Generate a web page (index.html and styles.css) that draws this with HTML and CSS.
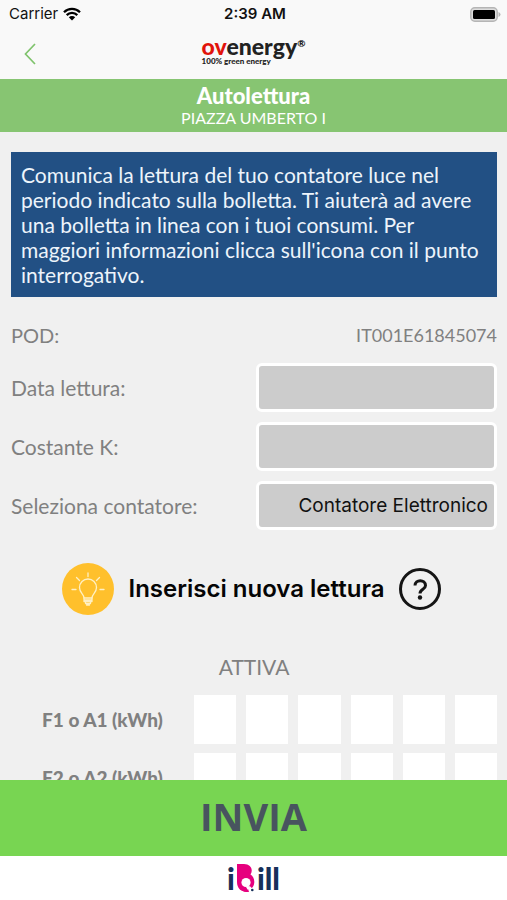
FILE: index.html
```html
<!DOCTYPE html>
<html lang="it">
<head>
<meta charset="utf-8">
<meta name="viewport" content="width=device-width, initial-scale=1">
<title>Autolettura</title>
<link rel="stylesheet" href="styles.css">
</head>
<body>
<div class="app">
  <div class="status">
    <div class="status-left"><span>Carrier</span>
      <svg class="wifi" viewBox="0 0 18 14" aria-hidden="true"><path d="M1 5.2a11.4 11.4 0 0 1 16 0M3.7 8.1a7.5 7.5 0 0 1 10.6 0" fill="none" stroke="#000" stroke-width="2.3"/><path d="M5.8 10.3a4.5 4.5 0 0 1 6.400 0L9 13.600z"/></svg>
    </div>
    <time class="clock">2:39 AM</time>
    <div class="status-right">
      <svg class="battery" viewBox="0 0 31 15" aria-hidden="true"><rect x=".8" y=".8" width="26.4" height="13.4" rx="4" fill="#ddd" stroke="#b5b5b5" stroke-width="1.5"/><rect x="3" y="3" width="22" height="9" rx="1.500"/><path d="M28.500 5v5q2-.8 2-2.500t-2-2.500" fill="#b5b5b5"/></svg>
    </div>
  </div>
  <header class="nav">
    <button class="back" type="button" aria-label="Indietro"><svg viewBox="0 0 12 22" aria-hidden="true"><path d="M11 1 1.500 11 11 21" fill="none" stroke="#7fc36c" stroke-width="1.700"/></svg></button>
    <div class="brand">
      <div class="brand-name"><span class="brand-red">ov</span>energy<sup>®</sup></div>
      <div class="brand-tag">100% green energy</div>
    </div>
  </header>
  <div class="title">
    <h1>Autolettura</h1>
    <p>PIAZZA UMBERTO I</p>
  </div>
  <main class="content">
    <p class="info">Comunica la lettura del tuo contatore luce nel periodo indicato sulla bolletta. Ti aiuterà ad avere una bolletta in linea con i tuoi consumi. Per maggiori informazioni clicca sull'icona con il punto interrogativo.</p>
    <div class="pod"><span>POD:</span><span class="pod-value">IT001E61845074</span></div>
    <div class="fields">
      <div class="field"><label for="data">Data lettura:</label><input id="data" type="text"></div>
      <div class="field"><label for="costante">Costante K:</label><input id="costante" type="text"></div>
      <div class="field"><label for="contatore">Seleziona contatore:</label><select id="contatore"><option>Contatore Elettronico</option></select></div>
    </div>
    <div class="insert">
      <svg class="bulb" viewBox="0 0 52 52" aria-hidden="true"><circle cx="26" cy="26" r="26" fill="#ffc02c"/><g fill="none" stroke="#fff0c4" stroke-width="1.300" stroke-linecap="round" stroke-linejoin="round"><path d="M22 35c0-4-4.500-5-4.500-10.500a8.500 8.500 0 0 1 17 0C34.500 30 30 31 30 35z"/><path d="M22 35v3.500h8V35M22 37h8M23.500 38.500v2h5v-2M24.500 42h3M26 10v3.500M14.500 14.500l3 3M37.500 14.500l-3 3M10 26.500h4M38 26.500h4"/></g></svg>
      <h2>Inserisci nuova lettura</h2>
      <button class="help" type="button" aria-label="Aiuto"><svg viewBox="0 0 42 42" aria-hidden="true"><circle cx="21" cy="21" r="19.500" fill="none" stroke="#151515" stroke-width="3"/><path d="M16 17.500c0-6.500 10.500-6.500 10.500 0 0 4-5.500 3.500-5.500 8" fill="none" stroke="#151515" stroke-width="3"/><circle cx="21" cy="29.500" r="2.200" fill="#151515"/></svg></button>
    </div>
    <h3>ATTIVA</h3>
    <div class="readings">
      <div class="reading" role="group" aria-labelledby="f1"><span id="f1">F1 o A1 (kWh)</span><input aria-label="F1 cifra 1"><input aria-label="F1 cifra 2"><input aria-label="F1 cifra 3"><input aria-label="F1 cifra 4"><input aria-label="F1 cifra 5"><input aria-label="F1 cifra 6"></div>
      <div class="reading" role="group" aria-labelledby="f2"><span id="f2">F2 o A2 (kWh)</span><input aria-label="F2 cifra 1"><input aria-label="F2 cifra 2"><input aria-label="F2 cifra 3"><input aria-label="F2 cifra 4"><input aria-label="F2 cifra 5"><input aria-label="F2 cifra 6"></div>
    </div>
  </main>
  <button class="send" type="button">INVIA</button>
  <footer class="footer">
    <span>i</span><svg viewBox="0 0 18 28" role="img" aria-label="B"><path d="M0 0h7c7 0 9.500 6 6.500 10.500C16 12 17.500 15 17.300 18.500c-.3 3-1.300 4.500-2.600 5.500l-2.400-2.600L12 28C5 28.500 0 25 0 18z" fill="#e6007e"/><circle cx="9" cy="18.500" r="4.600" fill="#fff"/><path d="M11 21.500l3.500 3.500-2.500 3-3-5z" fill="#fff"/><path d="M4 23c2 2.500 5 3 7.500 2.500V28C8 28 5 27 3 25z" fill="#e6007e"/><circle cx="15.300" cy="26" r="1.300" fill="#17305a"/></svg><span>ill</span>
  </footer>
</div>
</body>
</html>
```
FILE: styles.css
```css
* { box-sizing: border-box; }
body { margin: 0; background: #f0f0f0; color: #808080; font-family: Lato, sans-serif; font-size: 20px; }
h1, h2, h3, p { margin: 0; }
button, input, select { font: inherit; border: 0; border-radius: 0; padding: 0; margin: 0; }
svg { display: block; }
.app { display: flex; flex-direction: column; height: 100vh; }
.status { display: grid; grid-template-columns: 1fr auto 1fr; align-items: center; height: 28px; padding: 0 6px 0 9px; background: #f9f9f9; color: #111; font: 15px/28px Inter, sans-serif; }
.status-left { display: flex; align-items: center; gap: 5px; }
.wifi { width: 18px; height: 14px; }
.clock { font-weight: 600; }
.status-right { display: flex; justify-content: flex-end; }
.battery { width: 31px; height: 15px; }
.nav { display: grid; grid-template-columns: 1fr auto 1fr; align-items: start; height: 51px; flex-shrink: 0; background: #f9f9f9; padding: 8px 24px; }
.back { justify-self: start; width: 14px; height: 32px; background: none; }
.back svg { width: 12px; height: 22px; margin-top: 4px; }
.brand { color: #222; }
.brand-name { font-size: 23px; line-height: 20px; font-weight: 900; }
.brand-name sup { font-size: 10px; line-height: 0; vertical-align: 8px; }
.brand-red { color: #e1130b; }
.brand-tag { font-size: 8px; line-height: 10px; font-weight: 900; }
.title { flex-shrink: 0; background: #87c572; color: #fff; text-align: center; padding: 5px 0 4px; }
.title h1 { font-size: 22px; line-height: 24px; font-weight: 900; }
.title p { font-size: 16px; line-height: 20px; }
.content { flex: 1; min-height: 0; overflow: hidden; padding: 20px 10px 0 11px; }
.info { background: #225084; color: #edf4fb; padding: 10px; font-size: 21px; line-height: 25px; }
.pod { display: flex; justify-content: space-between; line-height: 24px; margin: 26px 0 16px; }
.pod-value { font-size: 18px; }
.fields { display: grid; gap: 10px; }
.field { display: grid; grid-template-columns: 1fr 1fr; gap: 4px; align-items: center; }
.field label { font-size: 21px; line-height: 24px; }
.field input, .field select { width: 100%; height: 49px; background: #ccc; border: 3px solid #fff; border-radius: 6px; padding: 0 6px; text-align: right; color: #111; font: 19px Inter, sans-serif; }
.field select { appearance: none; text-align-last: right; opacity: 1; }
.insert { display: flex; justify-content: center; align-items: center; gap: 15px; margin: 33px 5px 38px 0; }
.bulb { width: 52px; height: 52px; }
.insert h2 { color: #050505; font: 600 24px/30px Inter, sans-serif; }
.help { background: none; }
.help svg { width: 42px; height: 42px; }
.content h3 { text-align: center; font-size: 21px; line-height: 28px; font-weight: 400; margin-bottom: 14px; }
.readings { display: grid; gap: 9px; }
.reading { display: grid; grid-template-columns: 173px repeat(6, 1fr); gap: 10px; align-items: center; }
.reading span { text-align: center; font-size: 19px; line-height: 24px; font-weight: 900; padding-left: 10px; }
.reading input { width: 100%; min-width: 0; height: 49px; background: #fff; text-align: center; }
.send { flex-shrink: 0; height: 76px; background: #78d552; color: #48545f; font: 700 38px/72px "Open Sans", sans-serif; padding-bottom: 4px; }
.footer { flex-shrink: 0; display: flex; justify-content: center; align-items: center; gap: 2px; height: 44px; background: #fff; color: #17305a; font: 900 30px/44px Lato, sans-serif; }
.footer svg { width: 18px; height: 28px; }
```
